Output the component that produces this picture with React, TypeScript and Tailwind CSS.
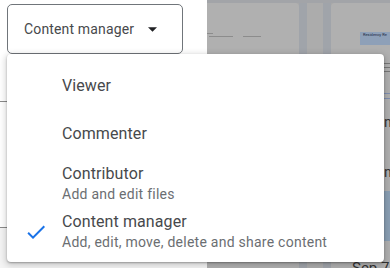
import React from "react";

function Check() {
  return (
    <svg width="24" height="24" viewBox="0 0 24 24" className="shrink-0">
      <path d="M9 16.17L4.83 12l-1.42 1.41L9 19 21 7l-1.41-1.41z" fill="#1a73e8" />
    </svg>
  );
}

function Item({ title, sub, checked, h }: { title: string; sub?: string; checked?: boolean; h: string }) {
  return (
    <div className={`flex items-center ${h}`}>
      <div className="w-[55px] pl-[17px] flex items-center">{checked ? <Check /> : null}</div>
      <div className="flex flex-col">
        <div className="text-[16px] leading-[20px] tracking-[0.1px] text-[#47494c]">{title}</div>
        {sub ? <div className="text-[14px] leading-[20px] tracking-[0.25px] text-[#6b6e72]">{sub}</div> : null}
      </div>
    </div>
  );
}

export default function App() {
  return (
    <div
      className="relative w-[390px] h-[268px] overflow-hidden flex bg-white"
      style={{ fontFamily: "Roboto, 'Liberation Sans', sans-serif" }}
    >
      {/* left white panel */}
      <div className="w-[207px] shrink-0 bg-white flex flex-col">
        <div className="pl-[7px] pt-[4px]">
          <div className="w-[176px] h-[50px] border border-[#70757a] rounded-[5px] flex items-center pl-[16px] pr-[25px] justify-between">
            <span className="text-[14px] tracking-[0.15px] text-[#47494c]">Content manager</span>
            <svg width="9" height="5" viewBox="0 0 10 5">
              <path d="M0 0l5 5 5-5z" fill="#202124" />
            </svg>
          </div>
        </div>
        <div className="h-[48px] border-b border-[#8a8a8a]" />
        <div className="h-[126px] border-b border-[#8a8a8a]" />
        <div className="flex-1 bg-[#f4f4f4]" />
      </div>

      {/* right dimmed area */}
      <div className="flex-1 bg-[#a8a8a8] flex flex-col">
        <div className="h-[3px] bg-[#a2a4a8]" />
        <div className="flex h-[265px]">
          <div className="w-[92px] bg-[#b0b0b0] rounded-tr-[4px] flex flex-col pt-[30px] gap-[2px]">
            <div className="h-[1px] w-[6px] bg-[#8c8c8c]" />
            <div className="flex gap-[10px] pl-[2px]">
              <div className="h-[1px] w-[24px] bg-[#8c8c8c]" />
              <div className="h-[1px] w-[18px] bg-[#8c8c8c]" />
            </div>
          </div>
          <div className="w-[8px] bg-[#a0a4aa]" />
          <div className="w-[16px] bg-[#acacac]" />
          <div className="w-[8px] bg-[#a0a4aa]" />
          <div className="flex-1 bg-[#b0b0b0] rounded-tl-[4px] flex flex-col items-end pt-[29px] overflow-hidden *:shrink-0">
            <div className="w-[30px] h-[13px] bg-[#8ea0b8] text-[4px] leading-[4px] text-[#1f2a44] px-[3px] pt-[1px]">Residency Re</div>
            <div className="h-[18px]" />
            <div className="w-[6px] flex flex-col gap-[3px]">
              <div className="h-[1px] bg-[#777]" />
              <div className="h-[1px] bg-[#777]" />
              <div className="h-[1px] bg-[#777]" />
            </div>
            <div className="h-[21px]" />
            <div className="w-[6px] flex flex-col gap-[4px]">
              <div className="h-[1px] bg-[#7f8fb0]" />
              <div className="h-[1px] bg-[#7f8fb0]" />
            </div>
            <div className="h-[17px]" />
            <div className="w-[6px] h-[12px] text-[#333] text-[14px] leading-[12px]">n</div>
            <div className="h-[38px]" />
            <div className="w-[6px] h-[12px] text-[#333] text-[14px] leading-[12px]">n</div>
            <div className="h-[13px]" />
            <div className="w-[10px] h-[50px] bg-[#8a9fb4]" />
            <div className="h-[20px]" />
            <div className="w-[38px] text-[15px] leading-[15px] text-[#333]">Sep 7</div>
          </div>
        </div>
      </div>

      {/* menu */}
      <div className="absolute left-[7px] top-[54px] w-[377px] h-[208px] bg-white rounded-[4px] shadow-[0_2px_6px_2px_rgba(0,0,0,0.15),0_1px_2px_rgba(0,0,0,0.3)] py-[8px] flex flex-col">
        <Item title="Viewer" h="h-[48px]" />
        <Item title="Commenter" h="h-[48px]" />
        <Item title="Contributor" sub="Add and edit files" h="h-[52px]" />
        <Item title="Content manager" sub="Add, edit, move, delete and share content" checked h="h-[44px]" />
      </div>
    </div>
  );
}
